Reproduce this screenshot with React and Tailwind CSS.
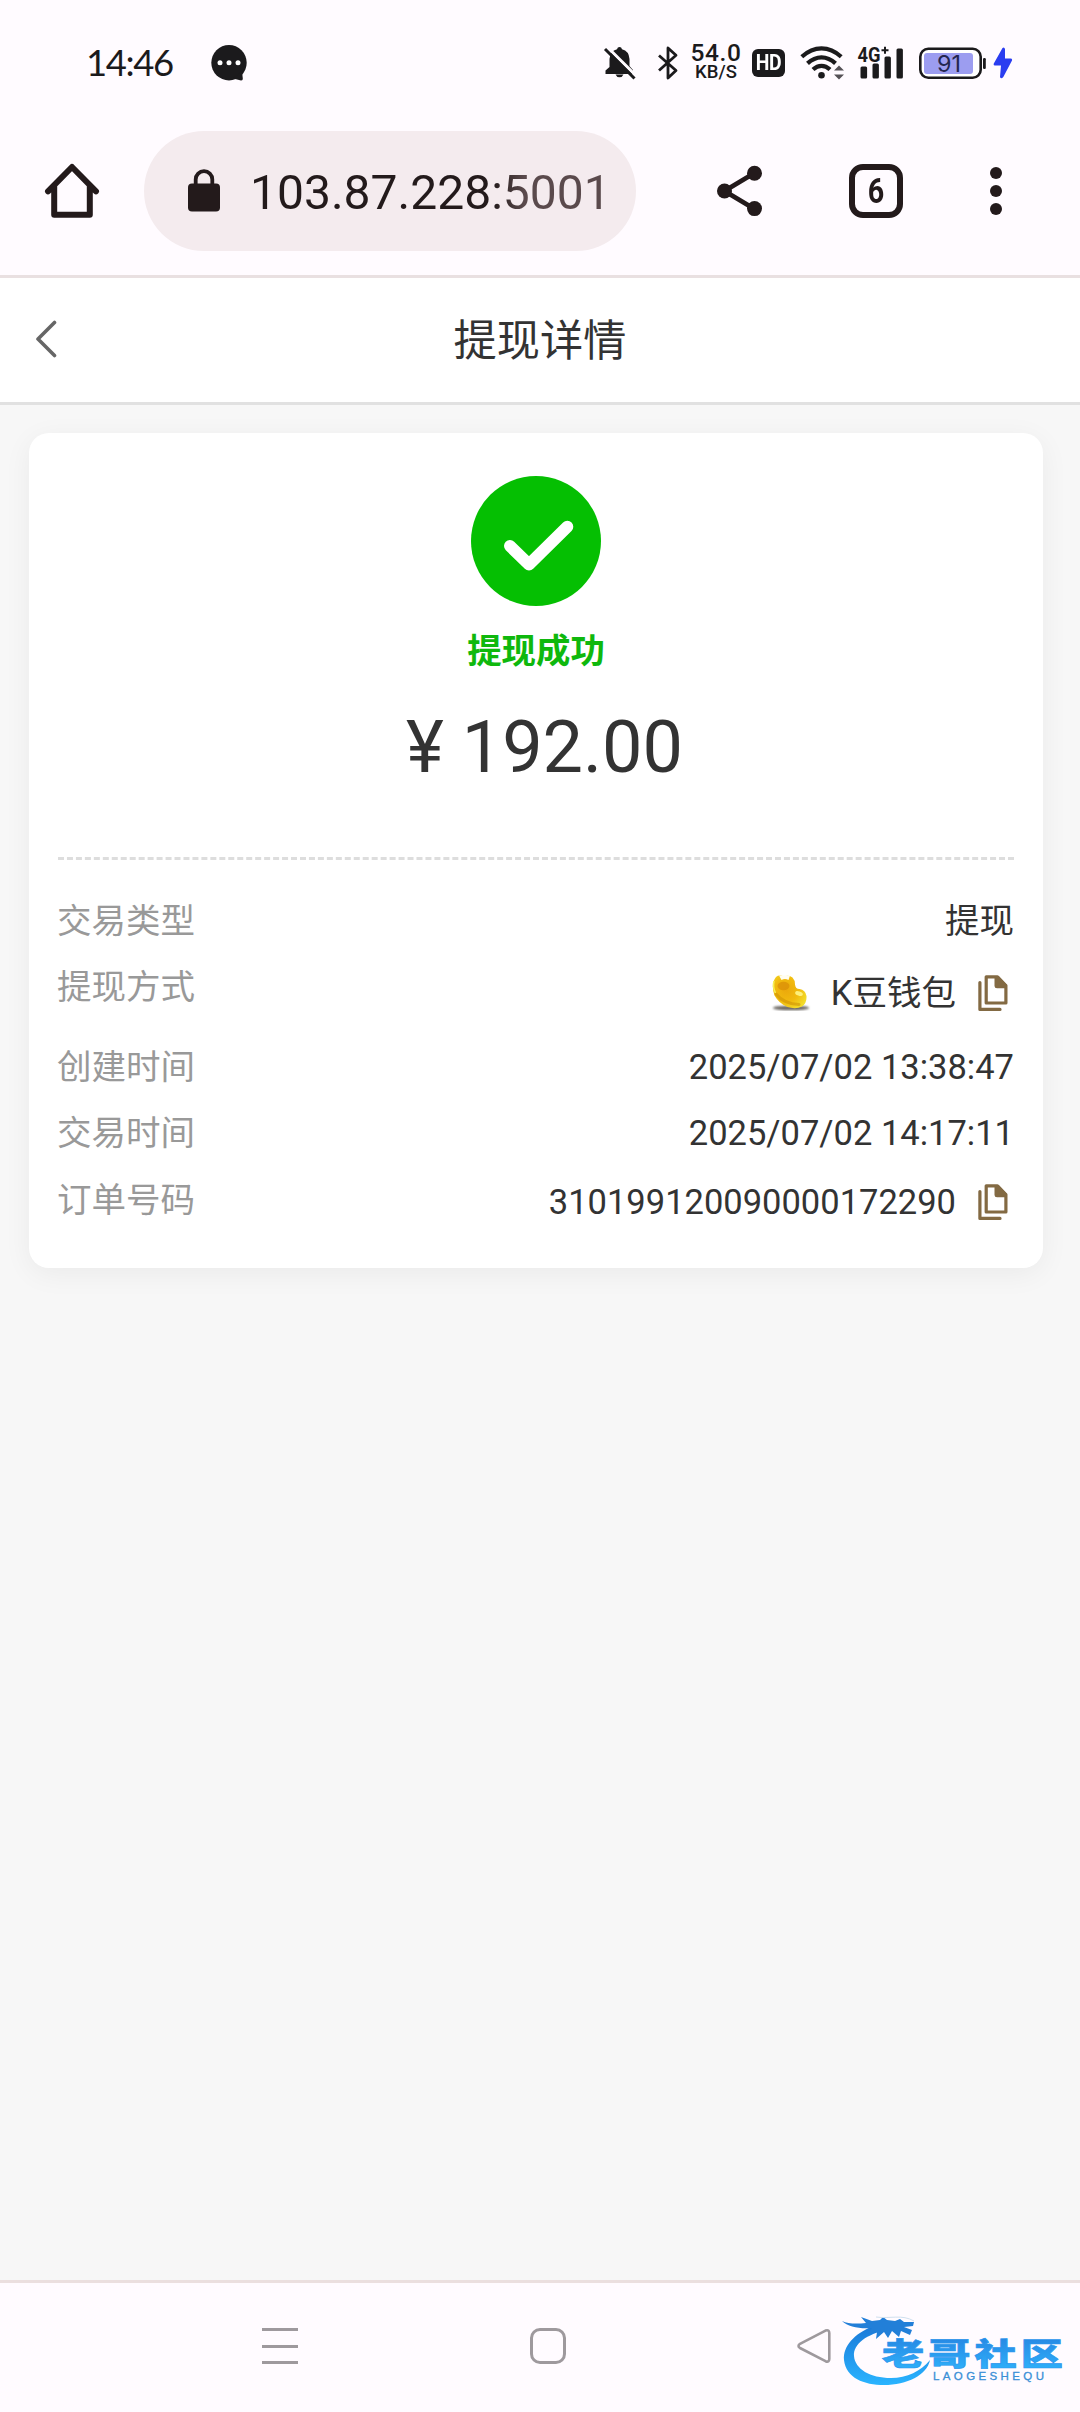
import React from "react";

const INK = "#1b1a1c";
const CHROME = "#231a1b";

function BubbleIcon() {
  return (
    <svg className="ml-[38px]" width="36" height="36" viewBox="0 0 36 36">
      <circle cx="18" cy="17.7" r="17.7" fill={INK} />
      <path d="M22 33.5 L30 35.5 Q32 35.6 31.8 33.6 L31 26 Z" fill={INK} />
      <circle cx="9" cy="17.8" r="2.5" fill="#fff" />
      <circle cx="18" cy="17.8" r="2.5" fill="#fff" />
      <circle cx="27" cy="17.8" r="2.5" fill="#fff" />
    </svg>
  );
}

function MutedBellIcon() {
  return (
    <svg className="shrink-0" width="34" height="34" viewBox="0 0 34 34">
      <path d="M2.5 28 V24.5 L6.5 21 V13 Q7 5 14 3.2 Q14.5 1 16.5 1 Q18.5 1 19 3.2 Q26 5 26.5 13 V20 L30 24 V28 Z" fill={INK} />
      <path d="M12.5 28.5 H20.5 Q19.5 31.2 16.5 31.2 Q13.5 31.2 12.5 28.5 Z" fill={INK} />
      <path d="M4.5 1.2 L35 31.7" stroke="#fffbff" strokeWidth="3" />
      <path d="M2 3 L31.5 32.5" stroke={INK} strokeWidth="3" />
    </svg>
  );
}

function BluetoothIcon() {
  return (
    <svg className="ml-[20px] shrink-0" width="22" height="34" viewBox="0 0 22 34">
      <path d="M2 9.5 L19 24.5 L11 32 V2 L19 9.3 L2 24.5" fill="none" stroke={INK} strokeWidth="2.8" strokeLinejoin="round" />
    </svg>
  );
}

function WifiIcon() {
  return (
    <svg className="ml-[15px] shrink-0" width="45" height="34" viewBox="0 0 45 34">
      <g fill="none" stroke={INK} strokeWidth="4.2">
        <path d="M1.8 10.8 Q11 2.4 21.5 2.4 Q32 2.4 41.2 10.8" />
        <path d="M7.5 17.4 Q14 11.3 21.5 11.3 Q29 11.3 35.5 17.4" />
        <path d="M13 23.6 Q17 19.8 21.5 19.8 Q26 19.8 30 23.6" />
      </g>
      <circle cx="21.5" cy="29.2" r="3.3" fill={INK} />
      <path d="M34 24.5 L39 19.5 L44 24.5 Z M34 28.5 L39 33.5 L44 28.5 Z" fill="#555156" />
    </svg>
  );
}

function SignalIcon() {
  return (
    <svg className="ml-[12px] shrink-0 overflow-visible" width="48" height="34" viewBox="0 0 48 34">
      <text x="0.5" y="15.5" fontFamily="Roboto" fontWeight="700" fontSize="20" textLength="23" lengthAdjust="spacingAndGlyphs" fill={INK}>4G</text>
      <path d="M24.5 4.2 H31.5 M28 0.7 V7.7" stroke={INK} strokeWidth="2" />
      <g fill={INK}>
        <rect x="3.5" y="20.5" width="6.6" height="12" rx="1.5" />
        <rect x="15.5" y="17.5" width="6.4" height="15" rx="1.5" />
        <rect x="27.5" y="10.5" width="6.4" height="22" rx="1.5" />
        <rect x="39.5" y="2.5" width="6.4" height="30" rx="1.5" />
      </g>
    </svg>
  );
}

function BatteryIcon() {
  return (
    <svg className="ml-[14px] shrink-0" width="68" height="34" viewBox="0 0 68 34">
      <rect x="1.3" y="2.8" width="60.4" height="28.9" rx="8" fill="#fff" stroke={INK} strokeWidth="2.6" />
      <rect x="5" y="7" width="49" height="21" rx="3" fill="#9c9df0" />
      <rect x="64" y="12" width="2.8" height="11" rx="1.2" fill={INK} />
      <text x="18" y="25.8" fontFamily="Inter" fontSize="23" textLength="24" lengthAdjust="spacingAndGlyphs" fill="#23264f">91</text>
    </svg>
  );
}

function StatusBar() {
  return (
    <div className="flex h-[125px] items-center bg-[#fffbff] pl-[86px]">
      <span className="w-[87px] text-[36.5px] leading-none tracking-[-1.4px] whitespace-nowrap text-[#1b1a1c] font-['Lato',sans-serif]">14:46</span>
      <BubbleIcon />
      <div className="ml-[356px] flex items-center">
        <MutedBellIcon />
        <BluetoothIcon />
        <div className="ml-[12px] flex w-[50px] flex-col items-center text-[#1b1a1c]">
          <span className="font-[Roboto] text-[24.5px] leading-[20px] font-medium tracking-[0.6px]">54.0</span>
          <span className="font-[Roboto] text-[18.5px] leading-[19px] font-medium">KB/S</span>
        </div>
        <div className="ml-[11px] flex h-[28px] w-[33px] items-center justify-center rounded-[6px] bg-[#1b1a1c]">
          <span className="scale-x-[0.88] font-[Roboto] text-[22px] leading-none font-bold tracking-[-0.5px] text-white">HD</span>
        </div>
        <WifiIcon />
        <SignalIcon />
        <BatteryIcon />
        <svg className="ml-[6px] shrink-0" width="20" height="32" viewBox="0 0 20 32">
          <path d="M9.5 1 L0.8 16.5 Q0.2 18.5 2 18.5 H8 L7 30 Q8 32.5 10.3 30 L19 13.5 Q19.5 11.6 17.5 11.6 H12 V2 Q11.2 -0.6 9.5 1 Z" fill="#2a3df0" />
        </svg>
      </div>
    </div>
  );
}

function BrowserBar() {
  return (
    <div className="flex h-[153px] items-start border-b-[3px] border-[#e9e0e1] bg-[#fffbff] pt-[6px]">
      <div className="flex h-[120px] items-center">
        <svg className="ml-[44px]" width="56" height="56" viewBox="0 0 56 56">
          <path d="M4 28.3 L28 4 L52 28.3 M10.2 23.5 V51.8 H45.8 V23.5" fill="none" stroke={CHROME} strokeWidth="6" strokeLinejoin="round" strokeLinecap="round" />
        </svg>
        <div className="ml-[44px] flex h-[120px] w-[492px] items-center rounded-full bg-[#f4ebee] pl-[44px]">
          <svg width="32" height="44" viewBox="0 0 32 44">
            <rect x="0" y="14.5" width="32" height="28" rx="4" fill={CHROME} />
            <path d="M7.7 16 V10.5 A8.3 8.3 0 0 1 24.3 10.5 V16" fill="none" stroke={CHROME} strokeWidth="3.8" />
          </svg>
          <span className="mt-[3px] ml-[30px] bg-gradient-to-r from-[#231a1b] from-67% to-[#5a4a4c] to-76% bg-clip-text font-[Roboto] text-[48px] leading-[60px] whitespace-nowrap text-transparent">103.87.228:5001</span>
        </div>
        <svg className="ml-[81px]" width="46" height="52" viewBox="0 0 46 52">
          <path d="M37.5 8 L7.5 26 L37.5 44" fill="none" stroke={CHROME} strokeWidth="4.8" />
          <circle cx="37.5" cy="8.2" r="7.5" fill={CHROME} />
          <circle cx="7.5" cy="26" r="7.5" fill={CHROME} />
          <circle cx="37.5" cy="43.6" r="7.5" fill={CHROME} />
        </svg>
        <div className="ml-[86px] flex h-[54px] w-[54px] items-center justify-center rounded-[14px] border-[6px] border-[#231a1b]">
          <span className="scale-x-[0.82] font-[Roboto] text-[35px] leading-none font-bold text-[#231a1b]">6</span>
        </div>
        <svg className="ml-[87px]" width="12" height="50" viewBox="0 0 12 50">
          <circle cx="6" cy="7" r="6" fill={CHROME} />
          <circle cx="6" cy="25" r="6" fill={CHROME} />
          <circle cx="6" cy="43" r="6" fill={CHROME} />
        </svg>
      </div>
    </div>
  );
}

function CopyIcon() {
  return (
    <svg className="mr-[6px] ml-[22px] shrink-0" width="30" height="37" viewBox="0 0 30 37">
      <path d="M1.9 7.5 V34.4 H22" fill="none" stroke="#836a43" strokeWidth="3.2" strokeLinecap="round" strokeLinejoin="round" />
      <path d="M8.2 1.8 H19.5 L27.9 10.5 V28 H8.2 Z" fill="#fff" stroke="#836a43" strokeWidth="3.2" strokeLinejoin="round" />
      <path d="M16.5 1 H20.5 L29 10 V13.3 H19 Q16.5 13.3 16.5 11 Z" fill="#836a43" />
    </svg>
  );
}

function BeanIcon() {
  return (
    <svg className="mr-[20px] shrink-0" width="40" height="36" viewBox="0 0 40 36">
      <defs>
        <radialGradient id="bean" cx="0.4" cy="0.45" r="0.65">
          <stop offset="0" stopColor="#eba90c" />
          <stop offset="0.55" stopColor="#f1ba0e" />
          <stop offset="1" stopColor="#f2dc2a" />
        </radialGradient>
        <filter id="soft" x="-20%" y="-100%" width="140%" height="300%">
          <feGaussianBlur stdDeviation="1.1" />
        </filter>
      </defs>
      <ellipse cx="20" cy="33" rx="18" ry="2.3" fill="#6d6964" filter="url(#soft)" />
      <path d="M5 2 Q8 -0.5 13 1.5 Q18 -0.5 21.5 2.5 Q24 5 24 9.5 Q24.5 14 28.5 14 Q34.5 15 35.5 21 Q36 28 31 31.5 Q25 34.5 16.5 32 Q8 28.5 3.5 20.5 Q-0.5 9 5 2 Z" fill="url(#bean)" />
      <path d="M8 0.5 L10.5 5 Q14 3 17.5 5 L19 0.5 Z" fill="#fffdf0" />
      <ellipse cx="12.5" cy="11" rx="6" ry="4.2" fill="#d98f08" opacity="0.75" />
      <path d="M5 19 Q13 29 28 29.5" fill="none" stroke="#cf9305" strokeWidth="3" opacity="0.6" strokeLinecap="round" />
      <ellipse cx="28" cy="18.5" rx="4" ry="2.2" fill="#fdf07c" transform="rotate(20 28 18.5)" />
      <path d="M3 6 Q1.5 12 4.5 18" fill="none" stroke="#f7ef55" strokeWidth="1.6" />
    </svg>
  );
}

function Row({ label, value, rowClass, bean, copy }) {
  return (
    <div className={"flex items-start justify-between " + rowClass}>
      <span className="-ml-px leading-[52px] text-[#999]">{label}</span>
      <div className="flex items-center leading-[52px] text-[#333]">
        {bean && <BeanIcon />}
        <span>{value}</span>
        {copy && <CopyIcon />}
      </div>
    </div>
  );
}

function DetailCard() {
  return (
    <div className="mt-[28px] ml-[29px] flex h-[835px] w-[1014px] flex-col rounded-[20px] bg-white px-[29px] pt-[43px] shadow-[0_6px_29px_rgba(0,0,0,0.055)]">
      <div className="flex flex-col items-center">
        <svg width="130" height="130" viewBox="0 0 130 130">
          <circle cx="65" cy="65" r="65" fill="#05bf02" />
          <path d="M39 70 L58 88.5 L96.3 50.7" fill="none" stroke="#fff" strokeWidth="12" strokeLinecap="round" strokeLinejoin="round" />
        </svg>
        <div className="mt-[19px] text-[34.4px] leading-[52px] font-bold text-[#0fb80d]">提现成功</div>
        <div className="mt-[21px] pl-[17px] text-[72px] leading-[100px] whitespace-pre text-[#333]">¥ 192.00</div>
      </div>
      <div className="mt-[59px] border-t-[3px] border-dashed border-[#dddddd]" />
      <div className="flex flex-col pt-[35px] text-[34.5px]">
        <Row label="交易类型" value="提现" rowClass="h-[66px]" />
        <Row label="提现方式" value="K豆钱包" rowClass="h-[80px] [&>div]:mt-[6px]" bean copy />
        <Row label="创建时间" value="2025/07/02 13:38:47" rowClass="h-[66px]" />
        <Row label="交易时间" value="2025/07/02 14:17:11" rowClass="h-[67px]" />
        <Row label="订单号码" value="310199120090000172290" rowClass="h-[66px] [&>div]:mt-[2px]" copy />
      </div>
    </div>
  );
}

function Watermark() {
  return (
    <svg className="absolute right-0 bottom-0" width="250" height="104" viewBox="0 0 250 104">
      <defs>
        <linearGradient id="wm" x1="0" y1="0" x2="0" y2="1">
          <stop offset="0" stopColor="#1b79d8" />
          <stop offset="1" stopColor="#2ab4ff" />
        </linearGradient>
        <linearGradient id="wmText" x1="0" y1="0" x2="0" y2="1">
          <stop offset="0.1" stopColor="#2683e0" />
          <stop offset="0.9" stopColor="#2eb0fa" />
        </linearGradient>
      </defs>
      <path d="M43 18 C24 26 13 38 14 52 C16 70 34 77 54 77 C77 77 97 67 100 52 C91 63 77 70 61 70 C40 70 25 61 24 48 C23 36 37 26 57 22 Z" fill="url(#wm)" />
      <path d="M12 13 C18 16 27 16 36 15 L31 9 L42 13 L50 12 L53 9 L57 12 L65 13 L70 11 L74 14 L84 14 L83 18 L74 19 L82 22 L80 27 L71 23 L69 29 L62 23 L58 30 L54 24 L46 31 L47 24 L38 26 L42 20 C30 21 18 19 12 13 Z" fill="#227fd8" />
      <path d="M46 9 C60 11 72 6 84 13" fill="none" stroke="#cfe0ef" strokeWidth="1" />
      <g transform="translate(52 0) scale(1.36 1)">
        <text x="0" y="57" fontFamily="'Noto Sans CJK SC', sans-serif" fontWeight="900" fontSize="31" textLength="133" fill="url(#wmText)" stroke="#2c97ee" strokeWidth="0.7">老哥社区</text>
      </g>
      <text x="103" y="71.5" fontFamily="'Liberation Sans', sans-serif" fontSize="11.5" textLength="111" fill="#3a8fd6" stroke="#3a8fd6" strokeWidth="0.3">LAOGESHEQU</text>
    </svg>
  );
}

function NavBar() {
  return (
    <div className="relative flex h-[132px] items-start border-t-[3px] border-[#ebdfdf] bg-[#fffbff] pt-[45px]">
      <div className="ml-[262px] flex h-[36px] w-[36px] flex-col justify-between">
        <div className="h-[3px] bg-[#9e999d]" />
        <div className="h-[3px] bg-[#9e999d]" />
        <div className="h-[3px] bg-[#9e999d]" />
      </div>
      <div className="ml-[232px] h-[36px] w-[36px] rounded-[10px] border-[3px] border-[#9e999d]" />
      <svg className="ml-[230px]" width="36" height="36" viewBox="0 0 36 36">
        <path d="M4 15.8 L29.5 2.6 Q33.3 1.3 33.3 5 V31 Q33.3 34.7 29.5 33.2 L4 20 Q1 18 4 15.8 Z" fill="none" stroke="#9e999d" strokeWidth="2.6" strokeLinejoin="round" />
      </svg>
      <Watermark />
    </div>
  );
}

export default function App() {
  return (
    <div className="flex h-[2412px] w-[1080px] flex-col overflow-hidden bg-[#f7f7f7] font-['Roboto','Noto_Sans_CJK_SC',sans-serif]">
      <StatusBar />
      <BrowserBar />
      <div className="flex h-[127px] items-center border-b-[3px] border-[#e1e1e1] bg-white">
        <svg className="mb-[2px] ml-[35px]" width="24" height="38" viewBox="0 0 24 38">
          <path d="M19.5 2.5 L3 19 L19.5 35.5" fill="none" stroke="#666" strokeWidth="3.6" strokeLinecap="round" strokeLinejoin="round" />
        </svg>
        <h1 className="mt-[4px] mr-[59px] flex-1 text-center text-[43.2px] leading-[60px] font-normal text-[#333]">提现详情</h1>
      </div>
      <main className="flex-1">
        <DetailCard />
      </main>
      <NavBar />
    </div>
  );
}
